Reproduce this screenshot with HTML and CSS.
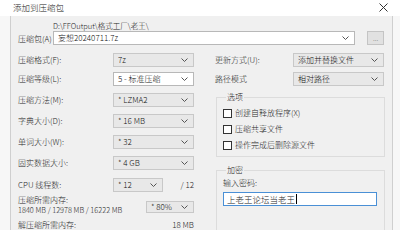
FILE: index.html
```html
<!DOCTYPE html>
<html lang="zh-CN">
<head>
<meta charset="utf-8">
<title>添加到压缩包</title>
<link rel="stylesheet" href="styles.css">
</head>
<body>
<div class="window">
  <div class="titlebar">
    <span class="title">添加到压缩包</span>
    <svg class="close" width="9" height="9" viewBox="0 0 9 9"><path d="M0.5 0.5 L8.5 8.5 M8.5 0.5 L0.5 8.5" stroke="#333" stroke-width="1" fill="none"/></svg>
  </div>
  <div class="frame">
    <div class="archive">
      <div class="path">D:\FFOutput\格式工厂\老王\</div>
      <div class="arc-label">压缩包(A)</div>
      <div class="combo edit"><span>妄想20240711.7z</span><svg class="chev" width="7" height="4" viewBox="0 0 7 4"><polyline points="0.5,0.5 3.5,3.5 6.5,0.5" fill="none" stroke="#555" stroke-width="1"/></svg></div>
      <div class="browse">...</div>
    </div>
    <div class="columns">
      <div class="left">
        <div class="rows">
          <div class="row first"><span class="lbl">压缩格式(F):</span><div class="combo"><span>7z</span><svg class="chev" width="7" height="4" viewBox="0 0 7 4"><polyline points="0.5,0.5 3.5,3.5 6.5,0.5" fill="none" stroke="#555" stroke-width="1"/></svg></div></div>
          <div class="row"><span class="lbl">压缩等级(L):</span><div class="combo edit"><span>5 - 标准压缩</span><svg class="chev" width="7" height="4" viewBox="0 0 7 4"><polyline points="0.5,0.5 3.5,3.5 6.5,0.5" fill="none" stroke="#555" stroke-width="1"/></svg></div></div>
          <div class="row"><span class="lbl">压缩方法(M):</span><div class="combo"><span>* LZMA2</span><svg class="chev" width="7" height="4" viewBox="0 0 7 4"><polyline points="0.5,0.5 3.5,3.5 6.5,0.5" fill="none" stroke="#555" stroke-width="1"/></svg></div></div>
          <div class="row"><span class="lbl">字典大小(D):</span><div class="combo"><span>* 16 MB</span><svg class="chev" width="7" height="4" viewBox="0 0 7 4"><polyline points="0.5,0.5 3.5,3.5 6.5,0.5" fill="none" stroke="#555" stroke-width="1"/></svg></div></div>
          <div class="row"><span class="lbl">单词大小(W):</span><div class="combo"><span>* 32</span><svg class="chev" width="7" height="4" viewBox="0 0 7 4"><polyline points="0.5,0.5 3.5,3.5 6.5,0.5" fill="none" stroke="#555" stroke-width="1"/></svg></div></div>
          <div class="row"><span class="lbl">固实数据大小:</span><div class="combo"><span>* 4 GB</span><svg class="chev" width="7" height="4" viewBox="0 0 7 4"><polyline points="0.5,0.5 3.5,3.5 6.5,0.5" fill="none" stroke="#555" stroke-width="1"/></svg></div></div>
          <div class="row cpu"><span class="lbl">CPU 线程数:</span><div class="combo small"><span>* 12</span><svg class="chev" width="7" height="4" viewBox="0 0 7 4"><polyline points="0.5,0.5 3.5,3.5 6.5,0.5" fill="none" stroke="#555" stroke-width="1"/></svg></div><span class="of">/ 12</span></div>
        </div>
        <div class="mem">
          <div class="mem-text">
            <div>压缩所需内存:</div>
            <div class="mem-nums">1840 MB / 12978 MB / 16222 MB</div>
          </div>
          <div class="combo pct"><span>* 80%</span><svg class="chev" width="7" height="4" viewBox="0 0 7 4"><polyline points="0.5,0.5 3.5,3.5 6.5,0.5" fill="none" stroke="#555" stroke-width="1"/></svg></div>
        </div>
        <div class="demem"><span>解压缩所需内存:</span><span>18 MB</span></div>
      </div>
      <div class="right">
        <div class="rows">
          <div class="row first"><span class="lbl r">更新方式(U):</span><div class="combo wide"><span>添加并替换文件</span><svg class="chev" width="7" height="4" viewBox="0 0 7 4"><polyline points="0.5,0.5 3.5,3.5 6.5,0.5" fill="none" stroke="#555" stroke-width="1"/></svg></div></div>
          <div class="row"><span class="lbl r">路径模式</span><div class="combo wide"><span>相对路径</span><svg class="chev" width="7" height="4" viewBox="0 0 7 4"><polyline points="0.5,0.5 3.5,3.5 6.5,0.5" fill="none" stroke="#555" stroke-width="1"/></svg></div></div>
        </div>
        <fieldset class="group options">
          <legend>选项</legend>
          <label class="check"><span class="box"></span>创建自释放程序(X)</label>
          <label class="check"><span class="box"></span>压缩共享文件</label>
          <label class="check"><span class="box"></span>操作完成后删除源文件</label>
        </fieldset>
        <fieldset class="group encrypt">
          <legend>加密</legend>
          <div class="pw-label">输入密码:</div>
          <div class="pw-input"><span>上老王论坛当老王</span><span class="caret"></span></div>
        </fieldset>
      </div>
    </div>
  </div>
</div>
</body>
</html>
```

FILE: styles.css
```css
* { box-sizing: border-box; }
html, body {
  margin: 0;
  padding: 0;
}
body {
  width: 400px;
  height: 230px;
  overflow: hidden;
  background: #f7f7f7;
  font-family: "Noto Sans CJK SC", "Microsoft YaHei", "Noto Sans", sans-serif;
  font-size: 8px;
  font-weight: 300;
  line-height: 10px;
  color: #262626;
  white-space: nowrap;
}
.window {
  width: 400px;
  height: 230px;
}
.titlebar {
  height: 16px;
  background: #ffffff;
  display: flex;
  align-items: center;
  justify-content: space-between;
  padding: 0 13px 2px 13px;
}
.title {
  font-size: 8.5px;
  color: #222;
}
.close { display: block; margin-right: -1px; }
.frame {
  margin-left: 10px;
  width: 383px;
  height: 214px;
  background: #f0f0f0;
  border-left: 1px solid #cfcfcf;
  border-right: 1px solid #cfcfcf;
  padding: 4px 0 0 7px;
}
.archive {
  display: grid;
  grid-template-columns: 35px 302px 12px 17px;
  grid-template-rows: 11px 14px;
}
.path {
  grid-column: 2 / 5;
  grid-row: 1;
  font-size: 7.5px;
  line-height: 11px;
  color: #222;
}
.arc-label {
  grid-column: 1;
  grid-row: 2;
  align-self: center;
  padding-top: 2px;
}
.archive .combo {
  grid-column: 2;
  grid-row: 2;
  height: 14px;
}
.browse {
  grid-column: 4;
  grid-row: 2;
  height: 14px;
  background: #e1e1e1;
  border: 1px solid #c4c4c4;
  font-size: 7px;
  color: #777;
  display: flex;
  align-items: center;
  justify-content: center;
  line-height: 8px;
}
.combo {
  display: flex;
  align-items: center;
  justify-content: space-between;
  height: 14px;
  background: #e8e8e8;
  border: 1px solid #c8c8c8;
  padding: 0 5px 0 4px;
  font-size: 8px;
  color: #111;
}
.combo.edit { background: #ffffff; border-color: #b8b8b8; }
.chev { display: block; flex: none; }
.columns {
  display: flex;
  gap: 21px;
  margin-top: 8px;
}
.left { width: 176px; }
.right { width: 170px; }
.rows {
  display: flex;
  flex-direction: column;
  gap: 7px;
}
.row {
  display: flex;
  align-items: center;
  height: 14px;
}
.row.first { margin-bottom: -2px; }
.row.cpu { margin-top: 1px; }
.lbl { width: 95px; flex: none; }
.lbl.r { width: 78px; }
.left .combo { width: 81px; }
.left .combo.small { width: 50px; }
.of { margin-left: auto; font-size: 8px; }
.right .combo.wide { width: 91px; }
.mem {
  display: flex;
  justify-content: space-between;
  align-items: flex-end;
  margin-top: 3px;
}
.mem-nums {
  font-size: 7.4px;
  line-height: 9px;
}
.left .combo.pct {
  width: 48px;
  height: 12px;
  margin-bottom: 1px;
}
.demem {
  display: flex;
  justify-content: space-between;
  margin-top: 6px;
}
.demem span:last-child { font-size: 8px; }
.group {
  margin: 6px 0 0 1px;
  padding: 0 0 3px 6px;
  border: 1px solid #dcdcdc;
  width: 169px;
  min-width: 0;
}
.group legend {
  padding: 0 1px;
  margin-left: 3px;
  line-height: 10px;
  font-size: 8px;
}
.check {
  display: flex;
  align-items: center;
  height: 16px;
  gap: 3px;
}
.box {
  width: 9px;
  height: 9px;
  border: 1px solid #333;
  background: #fff;
  flex: none;
}
.options { padding-top: 3px; }
.encrypt {
  margin-top: 8px;
  height: 80px;
  padding-top: 2px;
}
.pw-label { line-height: 12px; }
.pw-input {
  margin-top: 3px;
  width: 154px;
  height: 14px;
  background: #fff;
  border: 1px solid #4a90d6;
  display: flex;
  align-items: center;
  padding-left: 3px;
  font-size: 8.5px;
}
.caret {
  width: 1px;
  height: 10px;
  background: #000;
  margin-left: 1px;
}
```
